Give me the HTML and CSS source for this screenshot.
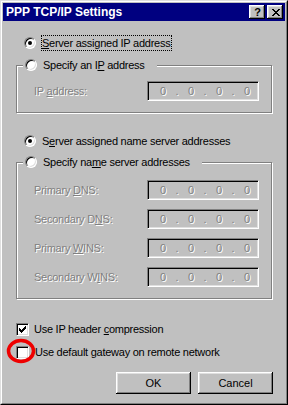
FILE: index.html
```html
<!DOCTYPE html>
<html>
<head>
<meta charset="utf-8">
<link rel="stylesheet" href="styles.css">
</head>
<body>
<div class="window">
  <div class="frame">
    <div class="titlebar">
      <span class="title">PPP TCP/IP Settings</span>
      <div class="tbtns">
        <span class="tbtn help">?</span>
        <span class="tbtn close"><svg width="8" height="7" viewBox="0 0 8 7" shape-rendering="crispEdges"><path d="M0 0h2v1h-2zM6 0h2v1h-2zM1 1h2v1h-2zM5 1h2v1h-2zM2 2h4v1h-4zM3 3h2v1h-2zM2 4h4v1h-4zM1 5h2v1h-2zM5 5h2v1h-2zM0 6h2v1h-2zM6 6h2v1h-2z" fill="#000"/></svg></span>
      </div>
    </div>
    <div class="content">
      <div class="row r1">
        <span class="radio checked"></span>
        <span class="focus"><u>S</u>erver assigned IP address</span>
      </div>
      <div class="group g1">
        <div class="legend">
          <span class="radio"></span>
          <span class="ltext">Specify an I<u>P</u> address</span>
        </div>
        <div class="frow">
          <span class="lbl dis">IP <u>a</u>ddress:</span>
          <span class="field"><span class="d">0</span><span class="p">.</span><span class="d">0</span><span class="p">.</span><span class="d">0</span><span class="p">.</span><span class="d">0</span></span>
        </div>
      </div>
      <div class="row r3">
        <span class="radio checked"></span>
        <span class="ltext">S<u>e</u>rver assigned name server addresses</span>
      </div>
      <div class="group g2">
        <div class="legend">
          <span class="radio"></span>
          <span class="ltext">Specify na<u>m</u>e server addresses</span>
        </div>
        <div class="frow">
          <span class="lbl dis">Primary <u>D</u>NS:</span>
          <span class="field"><span class="d">0</span><span class="p">.</span><span class="d">0</span><span class="p">.</span><span class="d">0</span><span class="p">.</span><span class="d">0</span></span>
        </div>
        <div class="frow">
          <span class="lbl dis">Secondary D<u>N</u>S:</span>
          <span class="field"><span class="d">0</span><span class="p">.</span><span class="d">0</span><span class="p">.</span><span class="d">0</span><span class="p">.</span><span class="d">0</span></span>
        </div>
        <div class="frow">
          <span class="lbl dis">Primary <u>W</u>INS:</span>
          <span class="field"><span class="d">0</span><span class="p">.</span><span class="d">0</span><span class="p">.</span><span class="d">0</span><span class="p">.</span><span class="d">0</span></span>
        </div>
        <div class="frow">
          <span class="lbl dis">Secondary W<u>I</u>NS:</span>
          <span class="field"><span class="d">0</span><span class="p">.</span><span class="d">0</span><span class="p">.</span><span class="d">0</span><span class="p">.</span><span class="d">0</span></span>
        </div>
      </div>
      <div class="row c1">
        <span class="check"><svg width="7" height="7" viewBox="0 0 7 7" shape-rendering="crispEdges"><path d="M6 0h1v3h-1zM5 1h1v3h-1zM4 2h1v3h-1zM3 3h1v3h-1zM2 4h1v3h-1zM1 3h1v3h-1zM0 2h1v3h-1z" fill="#000"/></svg></span>
        <span class="ltext">Use IP header <u>c</u>ompression</span>
      </div>
      <div class="row c2">
        <span class="check"></span>
        <span class="ltext">Use default <u>g</u>ateway on remote network</span>
        <svg class="mark" width="32" height="28" viewBox="0 0 32 28"><ellipse cx="15" cy="13" rx="12.5" ry="10.5" fill="none" stroke="#ee0000" stroke-width="3.5"/></svg>
      </div>
      <div class="buttons">
        <span class="btn">OK</span>
        <span class="btn">Cancel</span>
      </div>
    </div>
  </div>
</div>
</body>
</html>
```

FILE: styles.css
```css
html, body {
  margin: 0;
  padding: 0;
  background: #c0c0c0;
}
.window {
  width: 288px;
  height: 405px;
  box-sizing: border-box;
  border: 1px solid;
  border-color: #dfdfdf #000 #000 #dfdfdf;
  background: #c0c0c0;
  font-family: "Liberation Sans", Arial, sans-serif;
  font-size: 11px;
  letter-spacing: -0.25px;
  color: #000;
}
.frame {
  height: 100%;
  box-sizing: border-box;
  border: 1px solid;
  border-color: #fff #808080 #808080 #fff;
  padding: 1px;
}
.titlebar {
  height: 18px;
  background: #000080;
  display: flex;
  align-items: center;
  justify-content: space-between;
  padding: 0 2px 0 3px;
}
.title {
  color: #fff;
  font-weight: bold;
  font-size: 12px;
  letter-spacing: 0;
}
.tbtns {
  display: flex;
  gap: 2px;
}
.tbtn {
  width: 16px;
  height: 14px;
  box-sizing: border-box;
  background: #c0c0c0;
  box-shadow: inset -1px -1px 0 #000, inset 1px 1px 0 #fff, inset -2px -2px 0 #808080, inset 2px 2px 0 #dfdfdf;
  display: flex;
  align-items: center;
  justify-content: center;
}
.help {
  font-weight: bold;
  font-size: 11px;
  letter-spacing: 0;
  line-height: 14px;
  padding-left: 1px;
}
.close svg { display: block; margin-left: 1px; }
.content {
  padding: 14px 12px 0 13px;
}
.row {
  display: flex;
  align-items: center;
  height: 16px;
  line-height: 16px;
  white-space: nowrap;
}
.radio {
  width: 12px;
  height: 12px;
  box-sizing: border-box;
  border-radius: 50%;
  background: #fff;
  border: 1px solid;
  border-color: #808080 #fff #fff #808080;
  box-shadow: inset 1px 1px 0 #000, inset -1px -1px 0 #dfdfdf;
  position: relative;
  flex: none;
}
.radio.checked::after {
  content: "";
  position: absolute;
  left: 3px;
  top: 3px;
  width: 4px;
  height: 4px;
  border-radius: 50%;
  background: #000;
}
.r1 .radio { margin-left: 8px; margin-right: 5px; }
.focus {
  border: 1px dotted #000;
  height: 14px;
  line-height: 14px;
  padding-right: 1px;
}
.r3 { margin-top: 20px; }
.r3 .radio { margin-left: 8px; margin-right: 6px; }
.group {
  position: relative;
  width: 256px;
  box-sizing: border-box;
  border: 1px solid #808080;
  box-shadow: 1px 1px 0 #fff, inset 1px 1px 0 #fff;
  padding: 0 12px 0 17px;
}
.g1 { margin-top: 14px; padding-top: 15px; padding-bottom: 11px; }
.g2 { margin-top: 13px; padding-top: 17px; padding-bottom: 11px; display: flex; flex-direction: column; gap: 9px; }
.legend {
  position: absolute;
  left: 6px;
  top: -9px;
  height: 16px;
  line-height: 16px;
  display: flex;
  align-items: center;
  background: #c0c0c0;
  padding: 0 12px 0 2px;
  white-space: nowrap;
}
.legend .radio { margin-right: 6px; }
.frow {
  display: flex;
  align-items: center;
  height: 20px;
}
.lbl { flex: 1; white-space: nowrap; }
.dis {
  color: #808080;
  text-shadow: 1px 1px 0 #fff;
}
.field {
  width: 112px;
  height: 20px;
  box-sizing: border-box;
  background: #c0c0c0;
  border: 1px solid;
  border-color: #808080 #fff #fff #808080;
  box-shadow: inset 1px 1px 0 #000, inset -1px -1px 0 #dfdfdf;
  display: flex;
  align-items: center;
  padding-left: 8px;
  color: #808080;
  text-shadow: 1px 1px 0 #fff;
  letter-spacing: 0;
}
.field .d, .field .p {
  width: 14px;
  text-align: center;
}
.c1 { margin-top: 22px; }
.c2 { margin-top: 7px; position: relative; }
.check {
  width: 13px;
  height: 13px;
  box-sizing: border-box;
  background: #fff;
  border: 1px solid;
  border-color: #808080 #fff #fff #808080;
  box-shadow: inset 1px 1px 0 #000, inset -1px -1px 0 #dfdfdf;
  display: flex;
  align-items: center;
  justify-content: center;
  margin-right: 5px;
  flex: none;
}
.check svg { display: block; }
.c2 .ltext { margin-left: 1px; }
.mark {
  position: absolute;
  left: -10px;
  top: -6px;
}
.buttons {
  display: flex;
  justify-content: flex-end;
  gap: 7px;
  margin-top: 12px;
}
.btn {
  width: 75px;
  height: 22px;
  box-sizing: border-box;
  background: #c0c0c0;
  box-shadow: inset -1px -1px 0 #000, inset 1px 1px 0 #fff, inset -2px -2px 0 #808080, inset 2px 2px 0 #dfdfdf;
  display: flex;
  align-items: center;
  justify-content: center;
  letter-spacing: 0;
}
```
